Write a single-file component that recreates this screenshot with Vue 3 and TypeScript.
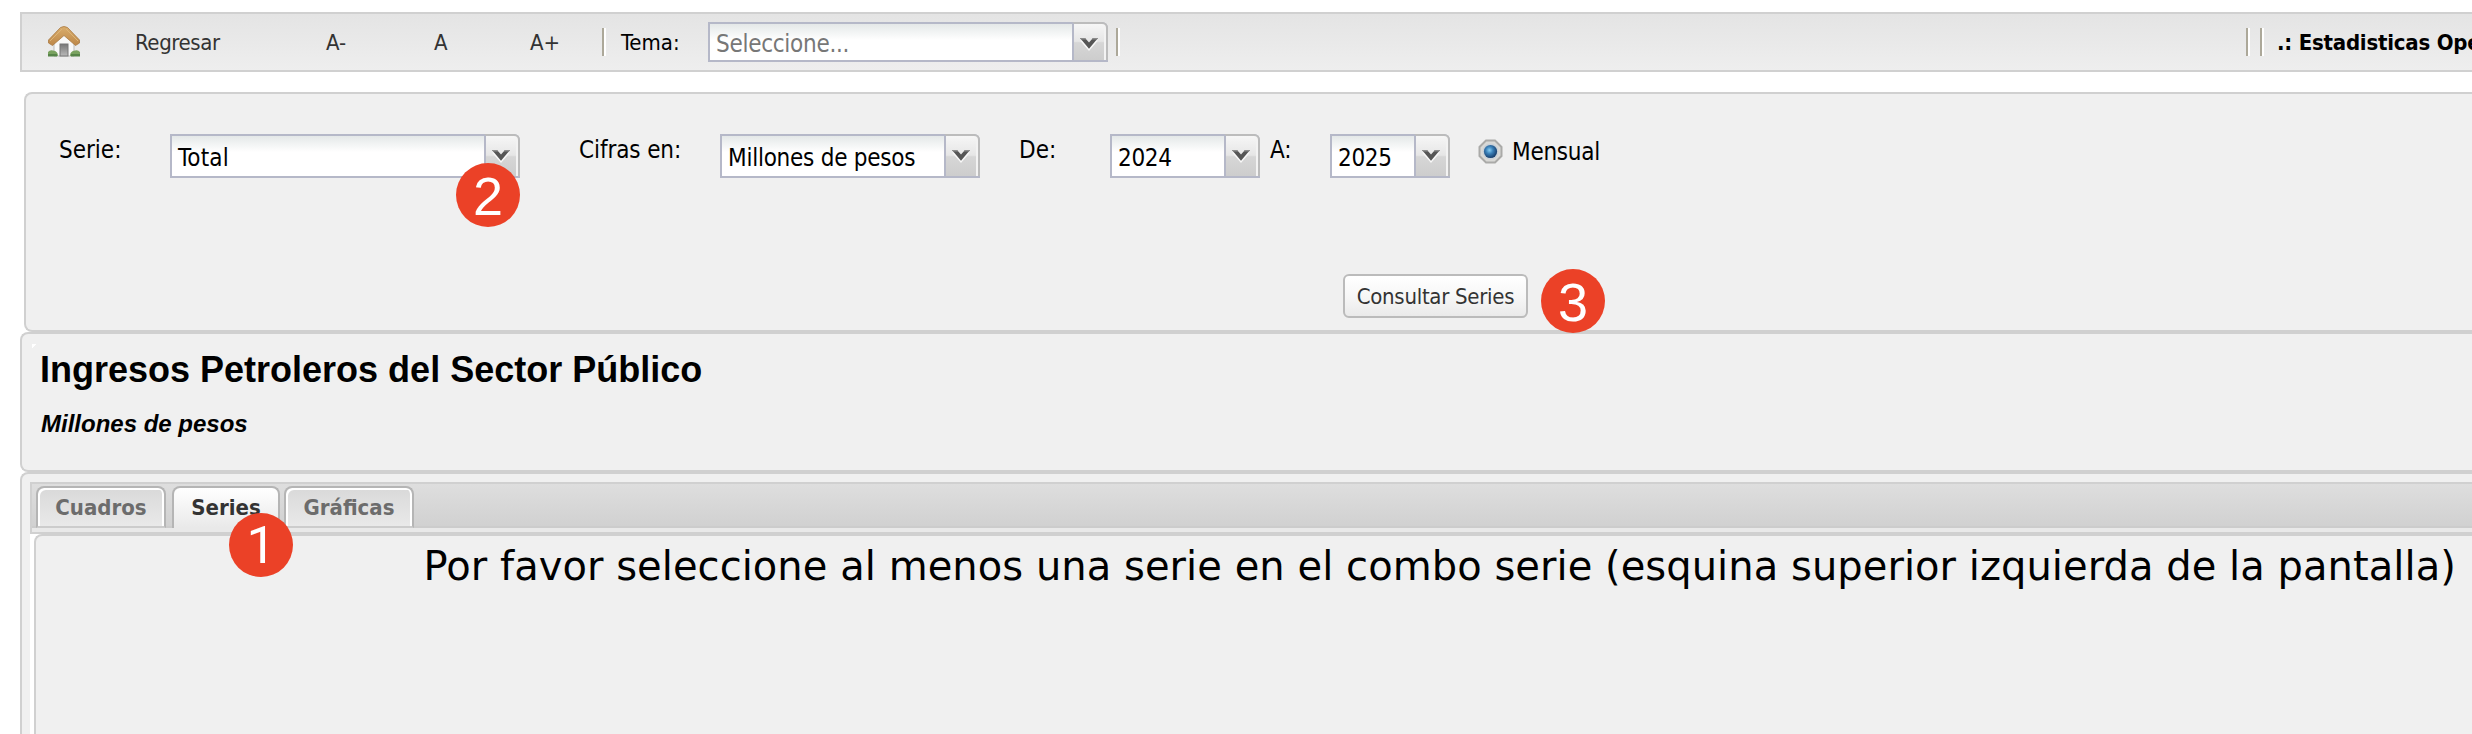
<script setup lang="ts">
import { defineComponent, h, ref } from 'vue'

const tabs = ['Cuadros', 'Series', 'Gráficas']
const activeTab = ref('Series')

const Chevron = defineComponent({
  render: () =>
    h('svg', { width: 20, height: 14, viewBox: '0 0 20 14' }, [
      h('path', { d: 'M1 3.5 L4 3.5 L10 10 L16 3.5 L19 3.5 L10 14 Z', fill: '#f8f8f8' }),
      h('path', { d: 'M1 1 H6 L10 5.6 L14 1 H19 L10 11.8 Z', fill: '#555' }),
      h('path', { d: 'M1 1 H6 L7.2 2.4 H2.2 Z M19 1 H14 L12.8 2.4 H17.8 Z', fill: '#8b8b8b' }),
    ]),
})
</script>

<template>
  <div class="page">
    <header class="toolbar">
      <svg class="home" width="32" height="32" viewBox="0 0 32 32">
        <defs>
          <linearGradient id="roof" x1="0" y1="0" x2="0" y2="1">
            <stop offset="0" stop-color="#d9ad6c" />
            <stop offset="1" stop-color="#bd8748" />
          </linearGradient>
          <linearGradient id="door" x1="0" y1="0" x2="0" y2="1">
            <stop offset="0" stop-color="#777" />
            <stop offset="1" stop-color="#b9b9b9" />
          </linearGradient>
        </defs>
        <path d="M6 15 L16 6 L26 15 V30 H6 Z" fill="#f8f8f8" stroke="#bdbdbd" stroke-width="1" />
        <path d="M0 30 V26 Q2 23.5 5 24.5 Q10 25 10 30 Z" fill="#79a25f" />
        <path d="M32 30 V26 Q30 23.5 27 24.5 Q22 25 22 30 Z" fill="#79a25f" />
        <path d="M0 28 H9 V30.5 H0 Z M23 28 H32 V30.5 H23 Z" fill="#568448" />
        <rect x="12" y="18" width="8" height="12" fill="url(#door)" stroke="#777" stroke-width="1" />
        <path d="M12.5 1.5 Q16 -0.5 19.5 1.5 L31.5 14 V17 L27.5 19.5 L16 9.5 L4.5 19.5 L0.5 17 V14 Z" fill="url(#roof)" stroke="#a97a42" stroke-width="0.8" />
        <path d="M2 15 L14 3 M18 3 L30 15" fill="none" stroke="#dcb477" stroke-width="1" />
      </svg>
      <span class="action regresar">Regresar</span>
      <span class="action">A-</span>
      <span class="action">A</span>
      <span class="action">A+</span>
      <i class="sep"></i>
      <span class="tema">Tema:</span>
      <div class="combo small">
        <span class="value placeholder">Seleccione...</span>
        <span class="trigger"><Chevron /></span>
      </div>
      <i class="sep"></i>
      <i class="sep"></i>
      <i class="sep"></i>
      <strong class="module">.: Estadisticas Ope</strong>
    </header>

    <section class="filters">
      <div class="fields">
        <label class="serie">Serie:</label>
        <div class="combo w350">
          <span class="value total">Total</span><span class="trigger"><Chevron /></span>
          <b class="badge on-serie">2</b>
        </div>
        <label class="cifras">Cifras en:</label>
        <div class="combo w260">
          <span class="value units">Millones de pesos</span><span class="trigger"><Chevron /></span>
        </div>
        <label>De:</label>
        <div class="combo w150">
          <span class="value year">2024</span><span class="trigger"><Chevron /></span>
        </div>
        <label>A:</label>
        <div class="combo w120">
          <span class="value year">2025</span><span class="trigger"><Chevron /></span>
        </div>
        <svg class="radio" width="26" height="26" viewBox="0 0 26 26">
          <defs>
            <radialGradient id="dot" cx="0.42" cy="0.4" r="0.6">
              <stop offset="0" stop-color="#86cdf2" />
              <stop offset="0.45" stop-color="#3a80b8" />
              <stop offset="1" stop-color="#173e6c" />
            </radialGradient>
          </defs>
          <path d="M8 1.5 H17 L23.5 8 V17 L17 23.5 H8 L1.5 17 V8 Z" fill="#d9d9d6" stroke="#aaaaa8" stroke-width="2" />
          <circle cx="12.5" cy="12.5" r="8" fill="#c9d1d8" />
          <circle cx="12.5" cy="12.5" r="6.6" fill="url(#dot)" />
        </svg>
        <label class="mensual">Mensual</label>
      </div>
      <button class="query">Consultar Series<b class="badge on-query">3</b></button>
    </section>

    <section class="heading">
      <h1>Ingresos Petroleros del Sector Público</h1>
      <h2>Millones de pesos</h2>
    </section>

    <section class="results">
      <nav class="strip">
        <div class="tabs">
          <div v-for="t in tabs" :key="t" class="tab" :class="{ active: t === activeTab }" @click="activeTab = t">
            {{ t }}<b v-if="t === 'Series'" class="badge on-tab">1</b>
          </div>
        </div>
      </nav>
      <div class="body">
        <p class="message">Por favor seleccione al menos una serie en el combo serie (esquina superior izquierda de la pantalla)</p>
      </div>
    </section>
  </div>
</template>

<style>
html,
body {
  margin: 0;
  background: #fff;
}
</style>

<style scoped>
.page {
  box-sizing: border-box;
  width: 2472px;
  height: 734px;
  padding: 12px 0 0 20px;
  overflow: hidden;
  font-family: "DejaVu Sans Condensed", "DejaVu Sans", sans-serif;
  font-size: 24px;
  color: #000;
  white-space: nowrap;
}
.page * {
  box-sizing: border-box;
}
.toolbar {
  display: grid;
  grid-template-columns: 86px 191px 108px 96px 73px 19px 87px 408px 1130px 14px 17px 1fr;
  align-items: center;
  height: 60px;
  padding-left: 26px;
  border: 2px solid #d0d0d0;
  border-right: 0;
  background: linear-gradient(#e4e4e4, #eee);
  font-size: 22px;
  line-height: 28px;
  overflow: hidden;
}
.home {
  display: block;
}
.action {
  padding: 1px 0 0 1px;
  color: #333;
}
.tema {
  padding-top: 1px;
}
.regresar {
  letter-spacing: -0.4px;
}
.sep {
  width: 4px;
  height: 28px;
  background: linear-gradient(90deg, #aca899 50%, #fff 50%);
}
.module {
  padding-top: 1px;
  letter-spacing: -0.22px;
}
.combo {
  position: relative;
  display: flex;
  height: 44px;
  border: 2px solid #b5b8c8;
  border-top-right-radius: 6px;
  background: linear-gradient(#e4e8e8, #fff 16px);
}
.combo.small {
  width: 400px;
  height: 40px;
}
.w350 { width: 350px; }
.w260 { width: 260px; }
.w150 { width: 150px; }
.w120 { width: 120px; }
.value {
  flex: 1;
  padding: 7px 0 0 6px;
  font-size: 24px;
  line-height: 30px;
}
.units {
  letter-spacing: -0.25px;
}
.total {
  letter-spacing: 0.2px;
}
.small .value {
  padding-top: 5px;
}
.year {
  letter-spacing: -0.35px;
}
.placeholder {
  color: #777;
  letter-spacing: -0.28px;
}
.trigger {
  display: flex;
  justify-content: center;
  width: 36px;
  margin: -2px -2px 0 0;
  padding: 13px 3px 0 0;
  border: solid #b5b8c8;
  border-width: 2px 2px 0 2px;
  border-top-color: #bcbcbc;
  border-right-color: #bcbcbc;
  border-top-right-radius: 6px;
  background: linear-gradient(90deg, transparent 30px, #f3f3f3 30px), linear-gradient(#f6f6f6, #e6e6e6 48%, #d6d6d6 52%, #cdcdcd);
}
.filters {
  height: 240px;
  margin: 20px 0 0 4px;
  padding: 40px 0 0 32px;
  border: 2px solid #d0d0d0;
  border-right: 0;
  border-radius: 8px 0 0 8px;
  background: #f0f0f0;
}
.fields {
  display: grid;
  grid-template-columns: 112px 409px 141px 299px 91px 160px 60px 148px 33px auto;
  align-items: start;
  height: 44px;
}
label {
  line-height: 32px;
}
.serie {
  padding-left: 1px;
}
.cifras {
  letter-spacing: -0.1px;
}
.mensual {
  padding: 2px 0 0 1px;
  letter-spacing: -0.25px;
}
.radio {
  display: block;
  margin-top: 5px;
}
.query {
  position: relative;
  display: block;
  width: 185px;
  height: 44px;
  margin: 96px 0 0 1285px;
  padding: 1px 0 0;
  border: 2px solid #bbb;
  border-radius: 6px;
  background: linear-gradient(#fff, #f7f7f7 50%, #eaeaea);
  color: #333;
  font: 22px/39px "DejaVu Sans Condensed", "DejaVu Sans", sans-serif;
  letter-spacing: -0.28px;
}
.heading {
  position: relative;
  height: 140px;
  padding: 15px 0 0 18px;
  border: 2px solid #d0d0d0;
  border-right: 0;
  border-radius: 8px 0 0 8px;
  background: linear-gradient(135deg, #fff 3px, transparent 3px) 10px 10px / 8px 8px no-repeat, #f0f0f0;
  font-family: "Liberation Sans", Arial, sans-serif;
}
h1 {
  margin: 0;
  font-size: 36px;
  line-height: 42px;
}
h2 {
  margin: 18px 0 0 1px;
  font-size: 24px;
  font-style: italic;
  line-height: 30px;
}
.results {
  height: 290px;
  padding: 8px 0 0 8px;
  border: 2px solid #d0d0d0;
  border-right: 0;
  border-radius: 8px 0 0 0;
  background: #f0f0f0;
}
.strip {
  height: 52px;
  border: 2px solid #d0d0d0;
  border-right: 0;
  background: #e9e9e9;
}
.tabs {
  display: flex;
  height: 44px;
  padding: 2px 0 0 4px;
  border-bottom: 2px solid #ccc;
  background: linear-gradient(#dedede, #d1d1d1);
}
.tab {
  position: relative;
  width: 130px;
  height: 42px;
  border: 2px solid #b5b5b5;
  border-bottom: 0;
  border-radius: 8px 8px 0 0;
  background: linear-gradient(#d9d9d9, #e9e9e9);
  box-shadow: inset 2px 2px 0 #fff, inset -2px 0 0 #fff;
  color: #6c6c6c;
  font-size: 22px;
  font-weight: bold;
  line-height: 40px;
  text-align: center;
}
.tab:not(.active) {
  border-bottom: 2px solid #ccc;
}
.tab.active {
  z-index: 1;
  width: 108px;
  margin: 0 4px 0 6px;
  background: linear-gradient(#fff, #e9e9e9);
  box-shadow: none;
  color: #333;
}
.body {
  height: 220px;
  border-left: 4px solid #fff;
  background: #fff;
}
.message {
  height: 220px;
  margin: 0;
  padding-left: 387.5px;
  border: 2px solid #d0d0d0;
  border-width: 2px 0 0 2px;
  border-radius: 8px 0 0 0;
  background: #f0f0f0;
  font-family: "DejaVu Sans", Verdana, sans-serif;
  font-size: 40px;
  line-height: 60px;
  letter-spacing: 0.05px;
}
.badge {
  position: absolute;
  z-index: 2;
  width: 64px;
  height: 64px;
  border-radius: 50%;
  background: #eb4127;
  color: #fff;
  font: 54px/67px "Liberation Sans", Arial, sans-serif;
  text-align: center;
  letter-spacing: 0;
}
.on-serie {
  top: 27px;
  left: 284px;
}
.on-query {
  top: -7px;
  left: 196px;
}
.on-tab {
  top: 25px;
  left: 55px;
  font: 52px/66px Roboto, "Liberation Sans", sans-serif;
}
</style>
